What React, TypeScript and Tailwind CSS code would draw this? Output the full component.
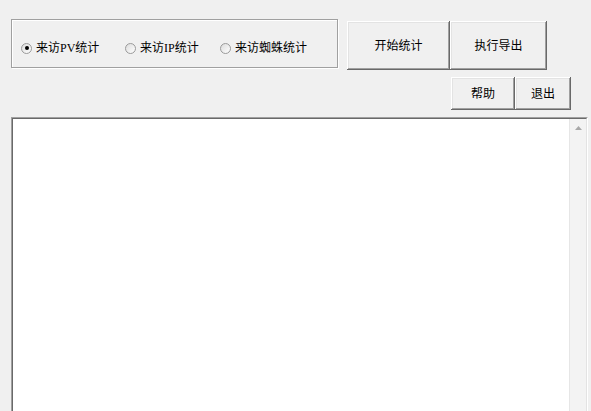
import { FC } from 'react';

const raised =
  'shadow-[inset_-1px_-1px_#696969,inset_1px_1px_#ffffff,inset_-2px_-2px_#a0a0a0,inset_2px_2px_#e3e3e3]';

const Radio: FC<{ label: string; checked?: boolean; width: string }> = ({ label, checked, width }) => (
  <label className={`flex items-center gap-[4px] ${width}`}>
    <span className="flex h-[11px] w-[11px] items-center justify-center rounded-full border border-[#9a9a9a] bg-gradient-to-br from-[#dcdcdc] to-white">
      {checked && <span className="h-[4px] w-[4px] rounded-full bg-black" />}
    </span>
    <span className="text-[12px] leading-[14px] text-black">{label}</span>
  </label>
);

const Btn: FC<{ label: string; w: string; h: string }> = ({ label, w, h }) => (
  <button className={`flex items-center justify-center bg-[#f0f0f0] text-[12px] text-black ${raised} ${w} ${h}`}>
    {label}
  </button>
);

export default function App() {
  return (
    <main
      className="h-[411px] w-[591px] overflow-hidden bg-[#f0f0f0]"
      style={{ fontFamily: '"Liberation Serif", "Noto Sans CJK SC", serif' }}
    >
      {/* top row */}
      <div className="flex items-start pl-[11px] pt-[19px]">
        <div className="flex h-[49px] w-[327px] items-center border border-[#a0a0a0] pl-[9px] pt-[9px] shadow-[inset_1px_1px_#ffffff,1px_1px_#ffffff]">
          <Radio label="来访PV统计" checked width="w-[104px]" />
          <Radio label="来访IP统计" width="w-[95px]" />
          <Radio label="来访蜘蛛统计" width="w-[110px]" />
        </div>
        <div className="ml-[9px] mt-[2px] flex">
          <Btn label="开始统计" w="w-[103px]" h="h-[49px]" />
          <Btn label="执行导出" w="w-[97px]" h="h-[49px]" />
        </div>
      </div>

      {/* second row */}
      <div className="mt-[7px] flex justify-end pr-[20px]">
        <Btn label="帮助" w="w-[64px]" h="h-[33px]" />
        <Btn label="退出" w="w-[56px]" h="h-[33px]" />
      </div>

      {/* output box */}
      <div className="ml-[11px] mt-[7px] h-[300px] w-[577px] border-l border-t border-[#a0a0a0] border-b-white border-r-white border-r border-b">
        <div className="flex h-full border-l border-t border-[#696969] border-b-[#e3e3e3] border-r-[#e3e3e3] border-r border-b bg-white">
          <div className="flex-1" />
          <div className="flex w-[17px] flex-col border-l border-[#e6e6e6] bg-[#f3f3f3]">
            <div className="flex h-[17px] items-center justify-center">
              <svg width="7" height="4" viewBox="0 0 7 4">
                <path d="M0 4 L3.5 0 L7 4 Z" fill="#a8a8a8" />
              </svg>
            </div>
          </div>
        </div>
      </div>
    </main>
  );
}
